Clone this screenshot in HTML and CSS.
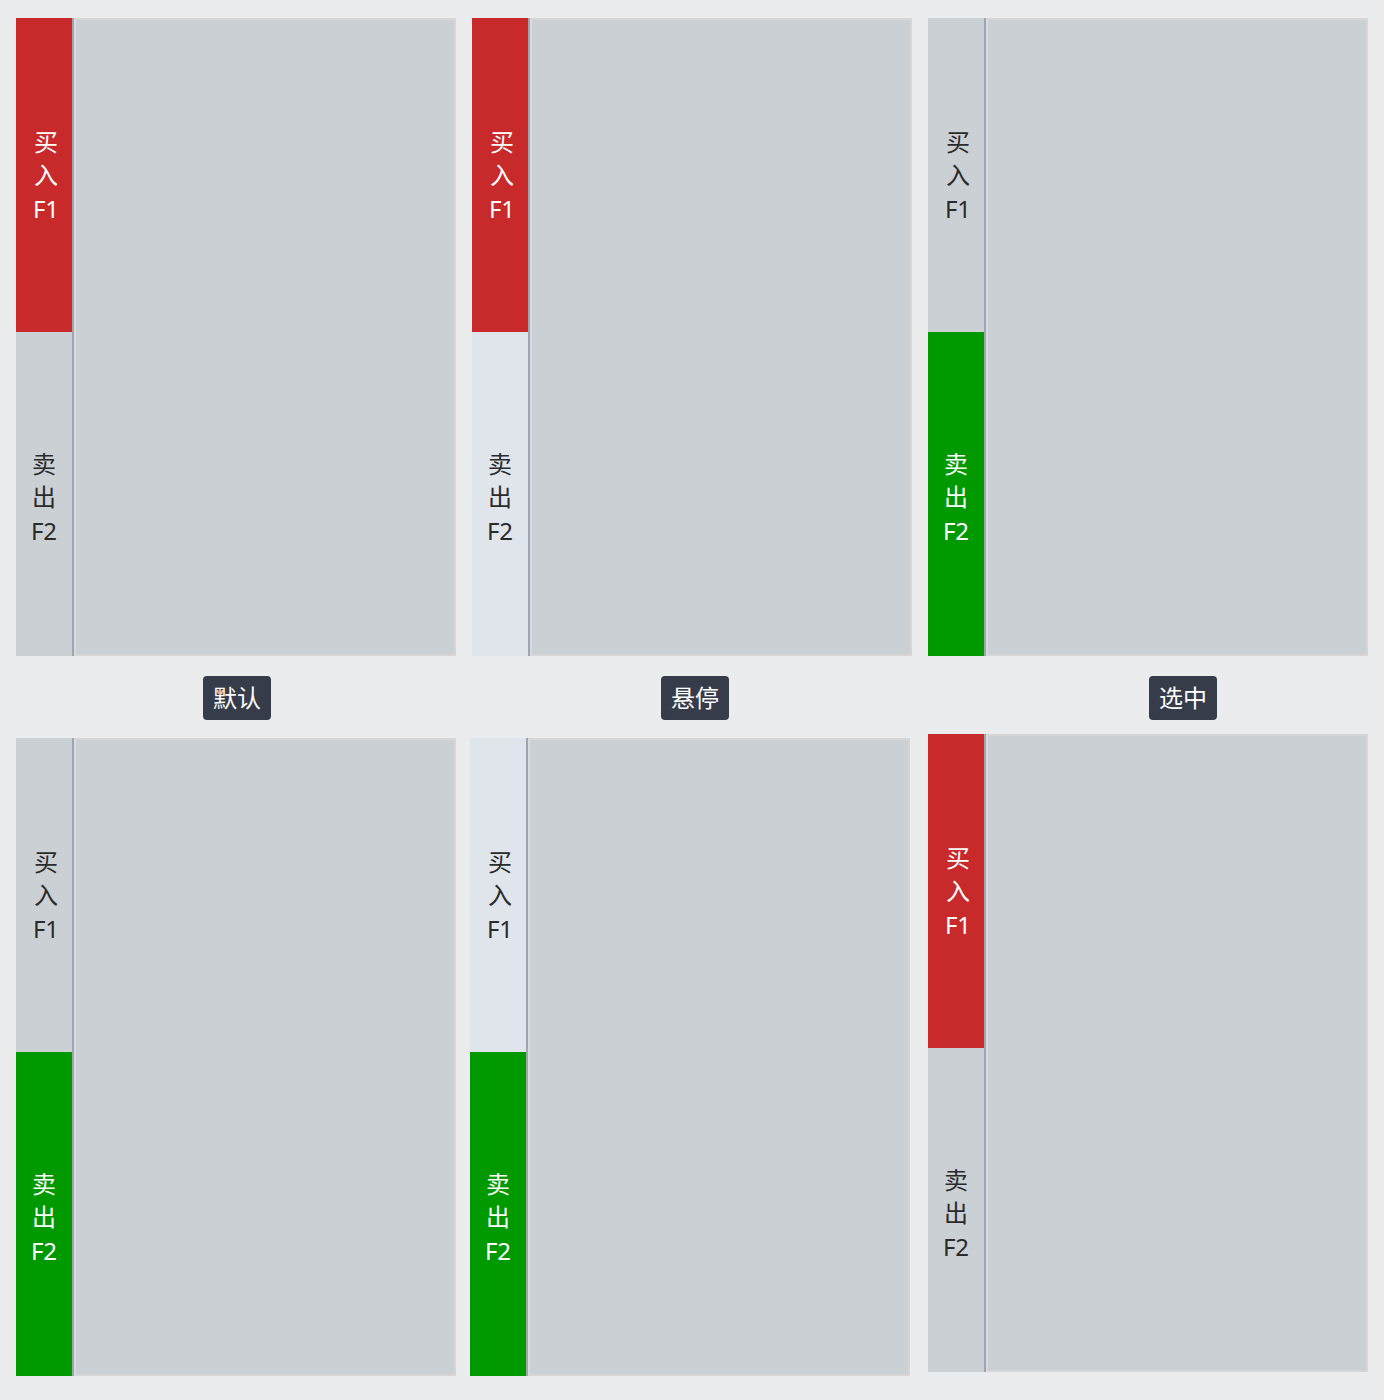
FILE: index.html
```html
<!DOCTYPE html>
<html lang="zh">
<head>
<meta charset="utf-8">
<title>买卖切换</title>
<link rel="stylesheet" href="styles.css">
</head>
<body>
<div class="grid">
  <div class="panel">
    <div class="tabs">
      <div class="tab buy on-buy"><span>买</span><span>入</span><span>F1</span></div>
      <div class="tab sell"><span>卖</span><span>出</span><span>F2</span></div>
    </div>
    <div class="content"></div>
  </div>
  <div class="panel">
    <div class="tabs">
      <div class="tab buy on-buy"><span>买</span><span>入</span><span>F1</span></div>
      <div class="tab sell hover"><span>卖</span><span>出</span><span>F2</span></div>
    </div>
    <div class="content"></div>
  </div>
  <div class="panel">
    <div class="tabs">
      <div class="tab buy"><span>买</span><span>入</span><span>F1</span></div>
      <div class="tab sell on-sell"><span>卖</span><span>出</span><span>F2</span></div>
    </div>
    <div class="content"></div>
  </div>
</div>

<div class="labels">
  <span class="badge b1">默认</span>
  <span class="badge b2">悬停</span>
  <span class="badge b3">选中</span>
</div>

<div class="grid">
  <div class="panel">
    <div class="tabs">
      <div class="tab buy"><span>买</span><span>入</span><span>F1</span></div>
      <div class="tab sell on-sell"><span>卖</span><span>出</span><span>F2</span></div>
    </div>
    <div class="content"></div>
  </div>
  <div class="panel shift-left">
    <div class="tabs">
      <div class="tab buy hover"><span>买</span><span>入</span><span>F1</span></div>
      <div class="tab sell on-sell"><span>卖</span><span>出</span><span>F2</span></div>
    </div>
    <div class="content"></div>
  </div>
  <div class="panel shift-up">
    <div class="tabs">
      <div class="tab buy on-buy"><span>买</span><span>入</span><span>F1</span></div>
      <div class="tab sell"><span>卖</span><span>出</span><span>F2</span></div>
    </div>
    <div class="content"></div>
  </div>
</div>
</body>
</html>
```
FILE: styles.css
```css
html, body {
  margin: 0;
  padding: 0;
  background: #ebecee;
}
body {
  padding: 18px 16px 0 16px;
  font-family: "Noto Sans", "Noto Sans CJK SC", sans-serif;
}
.grid {
  display: grid;
  grid-template-columns: 440px 440px 440px;
  column-gap: 16px;
}
.panel {
  display: flex;
  height: 638px;
}
.shift-left {
  margin-left: -2px;
  margin-right: 2px;
}
.shift-up {
  margin-top: -4px;
  margin-bottom: 4px;
}
.tabs {
  width: 56px;
  display: flex;
  flex-direction: column;
  border-right: 2px solid #9fa5ae;
  flex-shrink: 0;
}
.tab {
  display: flex;
  flex-direction: column;
  align-items: center;
  justify-content: center;
  background: #cbd0d4;
  color: #2a2a2a;
  font-size: 24px;
  line-height: 33.5px;
}
.tab span {
  display: block;
}
.tab.buy {
  height: 314px;
  padding-left: 4px;
  box-sizing: border-box;
}
.tab.sell {
  flex: 1;
  padding-top: 6px;
}
.tab.hover {
  background: #e0e5ec;
}
.tab.on-buy {
  background: #c8292a;
  color: #ffffff;
}
.tab.on-sell {
  background: #009900;
  color: #ffffff;
}
.content {
  flex: 1;
  background: #cbd0d4;
  border: 2px solid #d8d5d5;
  border-left-color: #d7dbe1;
}
.labels {
  display: flex;
  height: 82px;
  align-items: flex-start;
  padding-top: 20px;
  box-sizing: border-box;
}
.badge {
  display: inline-block;
  background: #363c4a;
  color: #ffffff;
  font-size: 24px;
  line-height: 34px;
  padding: 5px 10px;
  border-radius: 4px;
}
.b1 { margin-left: 187px; }
.b2 { margin-left: 390px; }
.b3 { margin-left: 420px; }
```
